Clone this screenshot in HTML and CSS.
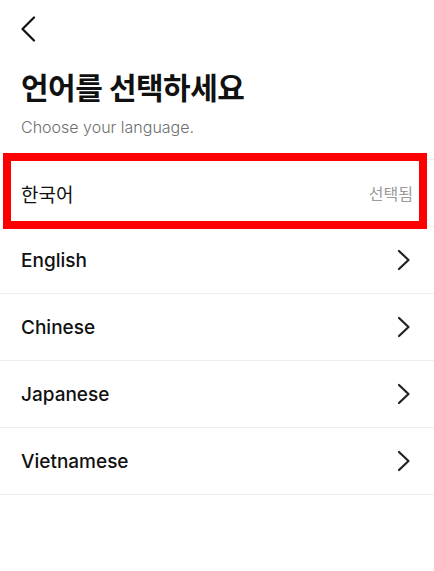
FILE: index.html
```html
<!DOCTYPE html>
<html lang="ko">
<head>
<meta charset="utf-8">
<link rel="stylesheet" href="styles.css">
</head>
<body>
<div class="screen">
  <header class="topbar">
    <svg class="back" width="16" height="26" viewBox="0 0 16 26"><path d="M14 1.5 L2.5 13 L14 24.5" fill="none" stroke="#111" stroke-width="2.2" stroke-linecap="round" stroke-linejoin="round"/></svg>
  </header>
  <h1 class="title">언어를 선택하세요</h1>
  <p class="subtitle">Choose your language.</p>
  <ul class="list">
    <li class="row selected">
      <span class="label label-ko">한국어</span>
      <span class="state">선택됨</span>
      <div class="highlight"></div>
    </li>
    <li class="row"><span class="label">English</span><svg class="chev" width="14" height="22" viewBox="0 0 14 22"><path d="M2 2 L11.5 11 L2 20" fill="none" stroke="#222" stroke-width="2.2" stroke-linecap="round" stroke-linejoin="round"/></svg></li>
    <li class="row"><span class="label">Chinese</span><svg class="chev" width="14" height="22" viewBox="0 0 14 22"><path d="M2 2 L11.5 11 L2 20" fill="none" stroke="#222" stroke-width="2.2" stroke-linecap="round" stroke-linejoin="round"/></svg></li>
    <li class="row"><span class="label">Japanese</span><svg class="chev" width="14" height="22" viewBox="0 0 14 22"><path d="M2 2 L11.5 11 L2 20" fill="none" stroke="#222" stroke-width="2.2" stroke-linecap="round" stroke-linejoin="round"/></svg></li>
    <li class="row"><span class="label">Vietnamese</span><svg class="chev" width="14" height="22" viewBox="0 0 14 22"><path d="M2 2 L11.5 11 L2 20" fill="none" stroke="#222" stroke-width="2.2" stroke-linecap="round" stroke-linejoin="round"/></svg></li>
  </ul>
</div>
</body>
</html>
```
FILE: styles.css
```css
* { box-sizing: border-box; }
html, body { margin: 0; padding: 0; background: #fff; }
body {
  font-family: Inter, "Noto Sans CJK KR", sans-serif;
  color: #111;
  width: 434px;
  height: 571px;
  overflow: hidden;
}
.screen { position: relative; }
.topbar {
  height: 58px;
  padding: 16px 0 0 20px;
}
.back { display: block; }
.title {
  margin: 12px 0 0 21px;
  font-size: 30px;
  line-height: 36px;
  font-weight: 700;
  letter-spacing: -0.5px;
  font-family: Inter, "Noto Sans CJK KR", sans-serif;
}
.subtitle {
  margin: 10px 0 0 21px;
  font-size: 16px;
  line-height: 22px;
  font-weight: 300;
  color: #6f6f6f;
}
.list {
  list-style: none;
  margin: 21px 0 0 0;
  padding: 0;
  border-top: 1px solid #eeeeee;
}
.row {
  position: relative;
  height: 67px;
  display: flex;
  align-items: center;
  justify-content: space-between;
  padding: 0 21px 0 21px;
  border-bottom: 1px solid #eeeeee;
}
.label {
  font-size: 19px;
  font-weight: 500;
  color: #111;
}
.label-ko { font-weight: 400; }
.state {
  font-size: 16px;
  color: #9a9a9a;
}
.chev { display: block; margin-right: 2px; }
.highlight {
  position: absolute;
  left: 3px;
  top: -7px;
  width: 424px;
  height: 76px;
  border: 8px solid #ff0000;
  pointer-events: none;
}
```
